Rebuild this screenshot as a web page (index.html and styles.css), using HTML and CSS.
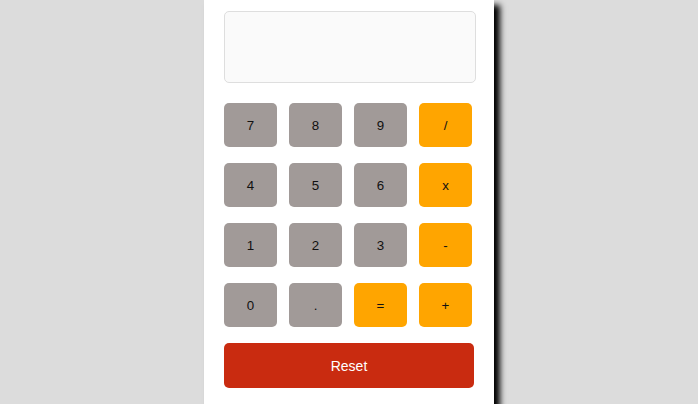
FILE: index.html
```html
<!DOCTYPE html>
<html>
<head>
<meta charset="utf-8">
<link rel="stylesheet" href="styles.css">
</head>
<body>
<div class="calc">
  <div class="display"></div>
  <div class="keys">
    <button class="key num">7</button>
    <button class="key num">8</button>
    <button class="key num">9</button>
    <button class="key op">/</button>
    <button class="key num">4</button>
    <button class="key num">5</button>
    <button class="key num">6</button>
    <button class="key op">x</button>
    <button class="key num">1</button>
    <button class="key num">2</button>
    <button class="key num">3</button>
    <button class="key op">-</button>
    <button class="key num">0</button>
    <button class="key num">.</button>
    <button class="key op">=</button>
    <button class="key op">+</button>
  </div>
  <button class="reset">Reset</button>
</div>
</body>
</html>
```
FILE: styles.css
```css
html, body {
  margin: 0;
  padding: 0;
  height: 100%;
}
body {
  background: #dcdcdc;
  font-family: "Liberation Sans", Arial, sans-serif;
  overflow: hidden;
}
.calc {
  width: 250px;
  margin: 0 auto;
  background: #fff;
  padding: 11px 20px 20px 20px;
  min-height: 420px;
  box-shadow: 6px 5px 6px #000;
}
.display {
  width: 250px;
  height: 70px;
  border: 1px solid #dedede;
  border-radius: 5px;
  background: #fafafa;
}
.keys {
  display: grid;
  grid-template-columns: repeat(4, 53px);
  column-gap: 12px;
  row-gap: 16px;
  margin-top: 20px;
}
.key {
  height: 44px;
  border: none;
  border-radius: 5px;
  font-family: "Liberation Sans", Arial, sans-serif;
  font-size: 13.333px;
  color: #111;
  padding: 0;
}
.num {
  background: #a19a98;
}
.op {
  background: #ffa500;
}
.reset {
  display: block;
  width: 250px;
  height: 45px;
  margin-top: 16px;
  border: none;
  border-radius: 5px;
  background: #c92b10;
  color: #fff;
  font-family: "Liberation Sans", Arial, sans-serif;
  font-size: 14px;
}
```
